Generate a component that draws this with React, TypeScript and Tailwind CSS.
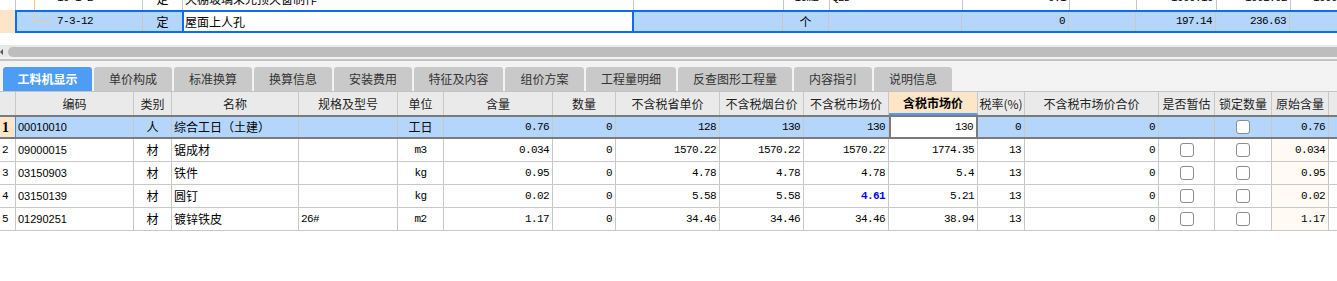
import React from 'react'

const mono = "font-['Liberation_Mono','DejaVu_Sans_Mono',monospace] text-[11px] tracking-[-0.6px]"
const cjk = "font-['Noto_Sans_CJK_SC','Noto_Sans',sans-serif] text-[12px]"
const sans = "font-['Liberation_Sans','Noto_Sans_CJK_SC',sans-serif] text-[11px]"

const fontFor = (t: string) => (/[\u4e00-\u9fff]/.test(t) ? cjk : mono)

type Align = 'l' | 'c' | 'r'

interface Col {
  title: string
  w: string
  align: Align
  code?: boolean
}

const cols: Col[] = [
  { title: '编码', w: 'w-[118px]', align: 'l', code: true },
  { title: '类别', w: 'w-[38px]', align: 'c' },
  { title: '名称', w: 'w-[127px]', align: 'l' },
  { title: '规格及型号', w: 'w-[99px]', align: 'l' },
  { title: '单位', w: 'w-[46px]', align: 'c' },
  { title: '含量', w: 'w-[109px]', align: 'r' },
  { title: '数量', w: 'w-[63px]', align: 'r' },
  { title: '不含税省单价', w: 'w-[104px]', align: 'r' },
  { title: '不含税烟台价', w: 'w-[84px]', align: 'r' },
  { title: '不含税市场价', w: 'w-[85px]', align: 'r' },
  { title: '含税市场价', w: 'w-[89px]', align: 'r' },
  { title: '税率(%)', w: 'w-[47px]', align: 'r' },
  { title: '不含税市场价合价', w: 'w-[134px]', align: 'r' },
  { title: '是否暂估', w: 'w-[56px]', align: 'c' },
  { title: '锁定数量', w: 'w-[57px]', align: 'c' },
  { title: '原始含量', w: 'w-[57px]', align: 'r' },
  { title: '损耗率', w: 'w-[80px]', align: 'r' },
]

const CHK = '[chk]'
const BLUE = '[blue]'

const rows: string[][] = [
  ['00010010', '人', '综合工日（土建）', '', '工日', '0.76', '0', '128', '130', '130', '130', '0', '0', '', CHK, '0.76', ''],
  ['09000015', '材', '锯成材', '', 'm3', '0.034', '0', '1570.22', '1570.22', '1570.22', '1774.35', '13', '0', CHK, CHK, '0.034', ''],
  ['03150903', '材', '铁件', '', 'kg', '0.95', '0', '4.78', '4.78', '4.78', '5.4', '13', '0', CHK, CHK, '0.95', ''],
  ['03150139', '材', '圆钉', '', 'kg', '0.02', '0', '5.58', '5.58', BLUE + '4.61', '5.21', '13', '0', CHK, CHK, '0.02', ''],
  ['01290251', '材', '镀锌铁皮', '26#', 'm2', '1.17', '0', '34.46', '34.46', '34.46', '38.94', '13', '0', CHK, CHK, '1.17', ''],
]

const tabs = [
  { label: '工料机显示', w: 'w-[89px]' },
  { label: '单价构成', w: 'w-[78px]' },
  { label: '标准换算', w: 'w-[78px]' },
  { label: '换算信息', w: 'w-[78px]' },
  { label: '安装费用', w: 'w-[78px]' },
  { label: '特征及内容', w: 'w-[89px]' },
  { label: '组价方案', w: 'w-[79px]' },
  { label: '工程量明细', w: 'w-[90px]' },
  { label: '反查图形工程量', w: 'w-[114px]' },
  { label: '内容指引', w: 'w-[78px]' },
  { label: '说明信息', w: 'w-[78px]' },
]

const alignCls = (a: Align) => (a === 'l' ? 'justify-start pl-[2px]' : a === 'c' ? 'justify-center' : 'justify-end pr-[3px]')

const Checkbox: React.FC = () => (
  <span className="block w-[14px] h-[14px] rounded-[3px] border border-[#8c8c8c] bg-white" />
)

const CellText: React.FC<{ text: string; code?: boolean }> = ({ text, code }) => {
  if (text === CHK) return <Checkbox />
  if (text.startsWith(BLUE)) {
    return <span className={`${mono} font-bold text-[#0000ff]`}>{text.slice(BLUE.length)}</span>
  }
  return <span className={`${code ? sans : fontFor(text)} whitespace-nowrap`}>{text}</span>
}

// 上方定额行（只露出一部分）
const TopRows: React.FC = () => (
  <div className="text-black">
    <div className="-mt-[13px] h-[23px] flex bg-white">
      <div className="w-[16px] shrink-0 border-r border-[#c8c8c8]" />
      <div className="w-[127px] shrink-0 border-r border-[#c8c8c8] flex items-center relative">
        <div className="absolute left-[18px] top-0 bottom-0 border-l border-[#ffc77d]" />
        <span className={`${mono} pl-[41px]`}>10-1-2</span>
      </div>
      <div className="w-[40px] shrink-0 border-r border-[#c8c8c8] flex items-center justify-center">
        <span className={cjk}>定</span>
      </div>
      <div className="w-[451px] shrink-0 border-r border-[#c8c8c8] flex items-center pl-[2px]">
        <span className={cjk}>天棚玻璃采光顶天窗制作</span>
      </div>
      <div className="w-[150px] shrink-0 border-r border-[#c8c8c8]" />
      <div className="w-[46px] shrink-0 border-r border-[#c8c8c8] flex items-center justify-center">
        <span className={mono}>10m2</span>
      </div>
      <div className="w-[133px] shrink-0 border-r border-[#c8c8c8] flex items-center pl-[2px]">
        <span className={mono}>QBD</span>
      </div>
      <div className="w-[107px] shrink-0 border-r border-[#c8c8c8] flex items-center justify-end pr-[3px]">
        <span className={mono}>0.1</span>
      </div>
      <div className="w-[67px] shrink-0 border-r border-[#c8c8c8]" />
      <div className="w-[80px] shrink-0 border-r border-[#c8c8c8] flex items-center justify-end pr-[3px]">
        <span className={mono}>1000.10</span>
      </div>
      <div className="w-[74px] shrink-0 border-r border-[#c8c8c8] flex items-center justify-end pr-[3px]">
        <span className={mono}>1001.02</span>
      </div>
      <div className="flex-1 flex items-center pl-[22px]">
        <span className={mono}>1000.1</span>
      </div>
    </div>
    <div className="h-[23px] flex">
      <div className="w-[15px] shrink-0 bg-[#fde5c8]" />
      <div className="flex-1 flex border-2 border-r-0 border-[#0b6cf4] bg-[#b4d6fd]">
        <div className="w-[126px] shrink-0 border-r border-[#c8c8c8] flex items-center">
          <div className="ml-[17px] w-[16px] h-[9px] self-start border-l border-b border-[#ffc77d]" />
          <span className={`${mono} pl-[7px]`}>7-3-12</span>
        </div>
        <div className="w-[39px] shrink-0 flex items-center justify-center">
          <span className={cjk}>定</span>
        </div>
        <div className="w-[452px] shrink-0 border-x-2 border-[#0b6cf4] bg-white flex items-center pl-[1px]">
          <span className={cjk}>屋面上人孔</span>
        </div>
        <div className="w-[149px] shrink-0 border-r border-[#c8c8c8]" />
        <div className="w-[46px] shrink-0 border-r border-[#c8c8c8] flex items-center justify-center">
          <span className={cjk}>个</span>
        </div>
        <div className="w-[133px] shrink-0 border-r border-[#c8c8c8]" />
        <div className="w-[107px] shrink-0 border-r border-[#c8c8c8] flex items-center justify-end pr-[3px]">
          <span className={mono}>0</span>
        </div>
        <div className="w-[67px] shrink-0 border-r border-[#c8c8c8]" />
        <div className="w-[80px] shrink-0 border-r border-[#c8c8c8] flex items-center justify-end pr-[3px]">
          <span className={mono}>197.14</span>
        </div>
        <div className="w-[74px] shrink-0 border-r border-[#c8c8c8] flex items-center justify-end pr-[3px]">
          <span className={mono}>236.63</span>
        </div>
        <div className="flex-1" />
      </div>
    </div>
  </div>
)

const ScrollBar: React.FC = () => (
  <div>
    <div className="h-[12px] mt-[12px] bg-[#e8e8e8] flex items-end">
      <div className="w-[8px] h-[10px] flex items-center">
        <span className="block w-0 h-0 border-y-[3px] border-y-transparent border-r-[3px] border-r-[#555]" />
      </div>
      <div className="flex-1 h-[10px] rounded-l-full bg-[#bdbdbd]" />
    </div>
    <div className="h-[2px] bg-[#f2f2f2]" />
    <div className="h-[2px] bg-[#c3c3c3]" />
  </div>
)

const Tabs: React.FC = () => (
  <div className="h-[30px] bg-[#f3f3f3] flex items-end gap-[2px] pl-[3px]">
    {tabs.map((t, i) => (
      <div
        key={t.label}
        className={`${t.w} h-[24px] shrink-0 rounded-t-[3px] flex items-center justify-center ${cjk} ${
          i === 0 ? 'bg-[#4d9cf6] text-white font-bold' : 'bg-[#c9c9c9] text-[#333]'
        }`}
      >
        {t.label}
      </div>
    ))}
  </div>
)

const Header: React.FC = () => (
  <div className="h-[24px] flex border-t border-[#c3c3c3] bg-[#eaeaea]">
    <div className="w-[16px] shrink-0 border-r border-[#c8c8c8]" />
    {cols.map((c) => {
      const sel = c.title === '含税市场价'
      return (
        <div
          key={c.title}
          className={`${c.w} shrink-0 border-r border-[#c8c8c8] flex items-center justify-center whitespace-nowrap overflow-hidden ${cjk} ${
            sel ? 'bg-[#fde5c8] font-bold text-black border-b-2 border-b-[#4d9cf6]' : 'text-[#222]'
          }`}
        >
          {c.title}
        </div>
      )
    })}
  </div>
)

const BodyRow: React.FC<{ n: number; cells: string[] }> = ({ n, cells }) => {
  const sel = n === 1
  return (
    <div className={`flex ${sel ? 'h-[24px] border-y-2 border-[#7b7b7b] bg-[#b4d6fd]' : 'h-[23px] border-b border-[#c8c8c8] bg-white'}`}>
      <div
        className={`w-[16px] shrink-0 border-r flex items-center pl-[2px] ${
          sel
            ? "bg-[#fde5c8] border-[#3c8cf0] font-['Liberation_Serif',serif] font-bold text-[14px]"
            : `border-[#c8c8c8] ${mono}`
        }`}
      >
        {n}
      </div>
      {cols.map((c, i) => {
        const edit = sel && c.title === '含税市场价'
        const orig = !sel && c.title === '原始含量'
        return (
          <div
            key={c.title}
            className={`${c.w} shrink-0 flex items-center overflow-hidden ${alignCls(c.align)} ${
              edit ? 'bg-white border-x-2 border-[#7b7b7b]' : 'border-r border-[#c8c8c8]'
            } ${orig ? 'bg-[#fffaf3]' : ''}`}
          >
            <CellText text={cells[i]} code={c.code} />
          </div>
        )
      })}
    </div>
  )
}

const App: React.FC = () => {
  return (
    <div className="w-[1337px] h-[281px] overflow-hidden bg-white text-black">
      <TopRows />
      <ScrollBar />
      <Tabs />
      <Header />
      {rows.map((r, i) => (
        <BodyRow key={i} n={i + 1} cells={r} />
      ))}
    </div>
  )
}

export default App
